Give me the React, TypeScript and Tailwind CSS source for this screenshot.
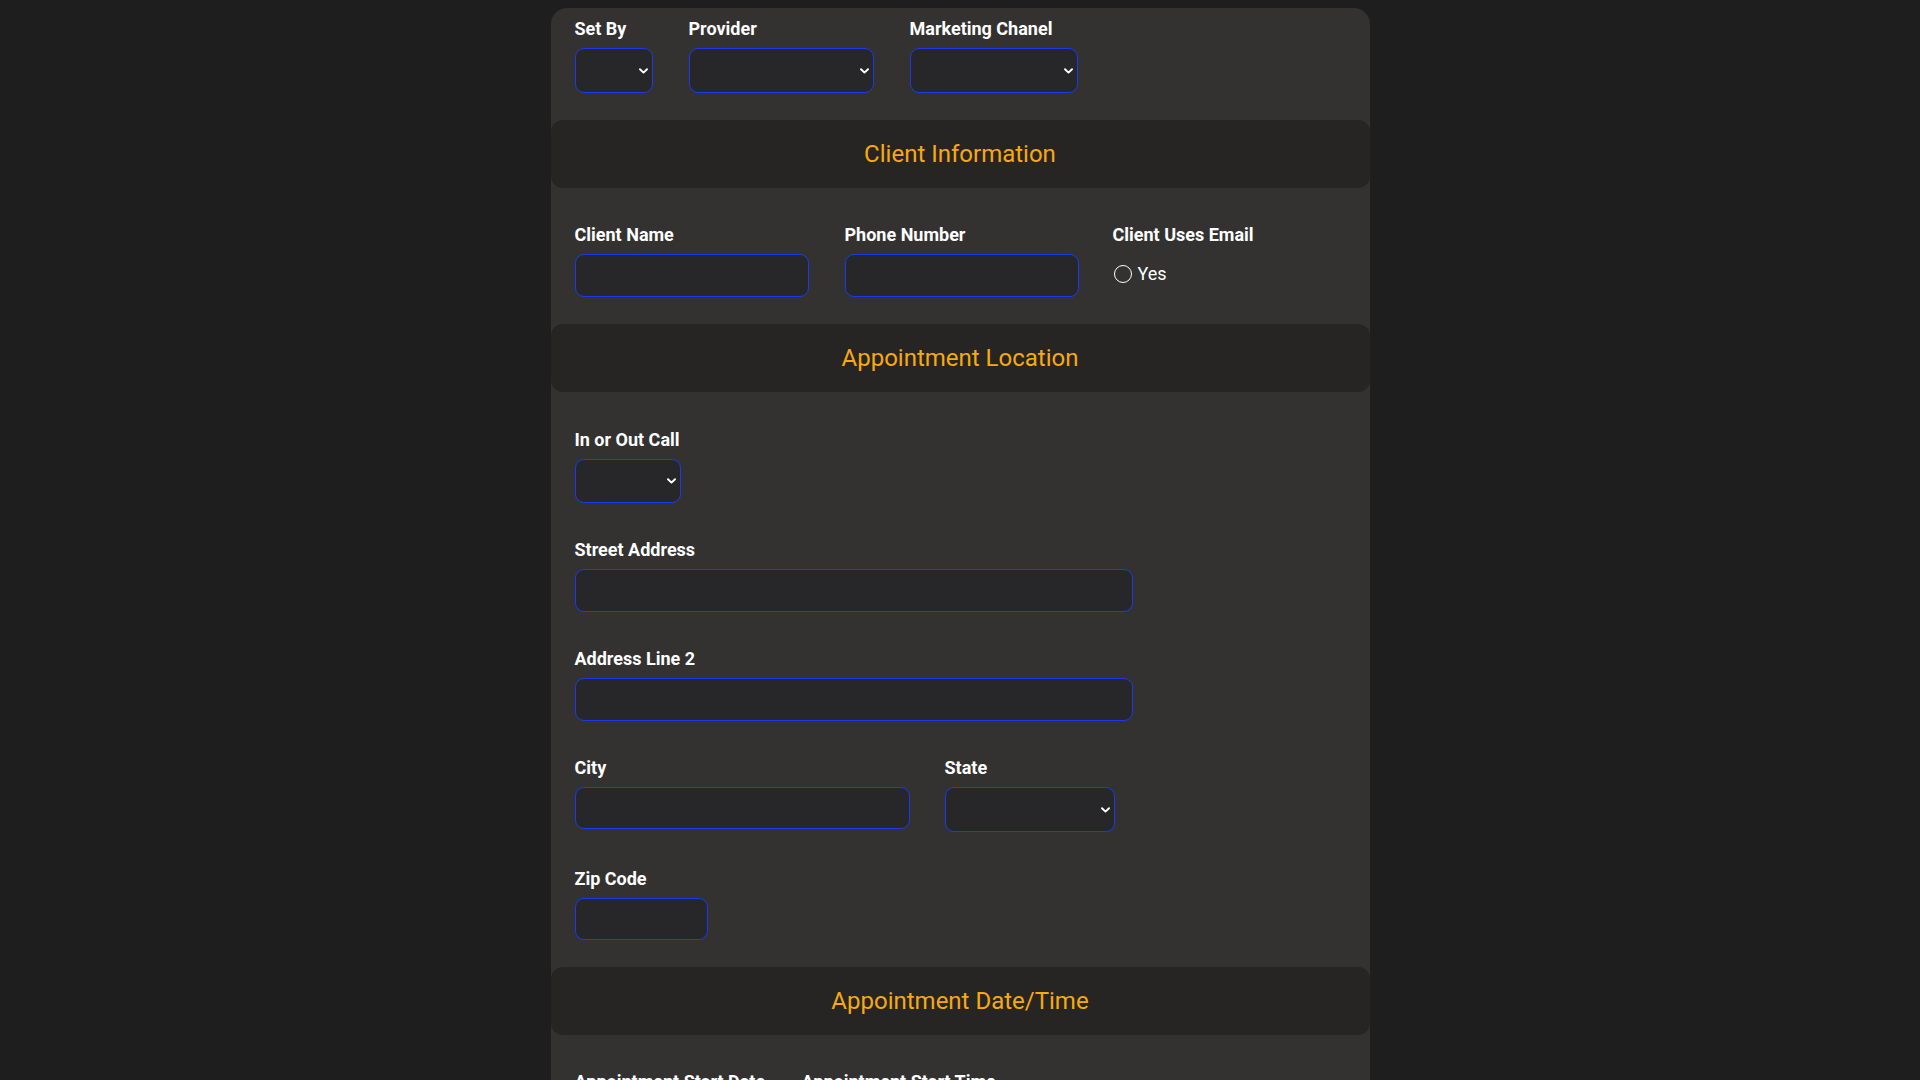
import React from "react";

const labelCls = "block text-[18px] leading-6 font-bold text-white pt-px mb-[7px]";
const boxCls =
  "block bg-[#27272a] border border-[#1a3af0] rounded-[9px] text-white text-base px-3 outline-none";

function Chevron() {
  return (
    <svg
      width="9"
      height="6"
      viewBox="0 0 9 6"
      className="absolute right-[5px] top-1/2 -translate-y-1/2 pointer-events-none"
    >
      <path d="M1 1.2 L4.5 4.6 L8 1.2" fill="none" stroke="#ffffff" strokeWidth="1.9" strokeLinecap="round" strokeLinejoin="round" />
    </svg>
  );
}

function SelectBox({ w, h = "h-[44px]" }: { w: string; h?: string }) {
  return (
    <div className={`relative ${w} ${h}`}>
      <select className={`${boxCls} appearance-none w-full h-full`} defaultValue="">
        <option value=""></option>
      </select>
      <Chevron />
    </div>
  );
}

function TextBox({ w, h = "h-[42px]" }: { w: string; h?: string }) {
  return <input type="text" className={`${boxCls} ${w} ${h}`} />;
}

function Field({ label, className = "", children }: { label: string; className?: string; children: React.ReactNode }) {
  return (
    <div className={className}>
      <label className={labelCls}>{label}</label>
      {children}
    </div>
  );
}

function SectionHeader({ title }: { title: string }) {
  return (
    <div className="h-[68px] rounded-xl bg-[#262524] flex items-center justify-center">
      <h2 className="text-[24px] text-[#f7a90f] font-normal">{title}</h2>
    </div>
  );
}

export default function App() {
  return (
    <div
      className="min-h-screen bg-[#1e1e1e] flex justify-center pt-2"
      style={{ fontFamily: "Roboto, 'Liberation Sans', sans-serif" }}
    >
      <div className="w-[819px] bg-[#333231] rounded-t-2xl pb-10">
        {/* top selectors */}
        <div className="flex pl-[24px] pt-2 pb-[27px]">
          <Field label="Set By" className="w-[114px]">
            <SelectBox w="w-[78px]" h="h-[45px]" />
          </Field>
          <Field label="Provider" className="w-[221px]">
            <SelectBox w="w-[185px]" h="h-[45px]" />
          </Field>
          <Field label="Marketing Chanel">
            <SelectBox w="w-[168px]" h="h-[45px]" />
          </Field>
        </div>

        <SectionHeader title="Client Information" />
        <div className="flex pl-[24px] pt-[34px] pb-[27px]">
          <Field label="Client Name" className="w-[270px]">
            <TextBox w="w-[234px]" h="h-[43px]" />
          </Field>
          <Field label="Phone Number" className="w-[268px]">
            <TextBox w="w-[234px]" h="h-[43px]" />
          </Field>
          <Field label="Client Uses Email">
            <div className="h-[43px] flex items-center gap-[6px] pl-[1px] -mt-[2px]">
              <span className="w-[18px] h-[18px] rounded-full border-[1.5px] border-white" />
              <span className="text-white text-[18px]">Yes</span>
            </div>
          </Field>
        </div>

        <SectionHeader title="Appointment Location" />
        <div className="flex flex-col gap-[34px] pl-[24px] pt-[35px] pb-[27px]">
          <Field label="In or Out Call">
            <SelectBox w="w-[106px]" />
          </Field>
          <Field label="Street Address">
            <TextBox w="w-[558px]" h="h-[43px]" />
          </Field>
          <Field label="Address Line 2">
            <TextBox w="w-[558px]" h="h-[43px]" />
          </Field>
          <div className="flex">
            <Field label="City" className="w-[370px]">
              <TextBox w="w-[335px]" />
            </Field>
            <Field label="State">
              <SelectBox w="w-[170px]" h="h-[45px]" />
            </Field>
          </div>
          <Field label="Zip Code">
            <TextBox w="w-[133px]" h="h-[42px]" />
          </Field>
        </div>

        <SectionHeader title="Appointment Date/Time" />
        <div className="flex pl-[24px] pt-[34px] pb-[27px]">
          <Field label="Appointment Start Date" className="w-[227px]">
            <TextBox w="w-[200px]" />
          </Field>
          <Field label="Appointment Start Time">
            <TextBox w="w-[170px]" />
          </Field>
        </div>
      </div>
    </div>
  );
}
